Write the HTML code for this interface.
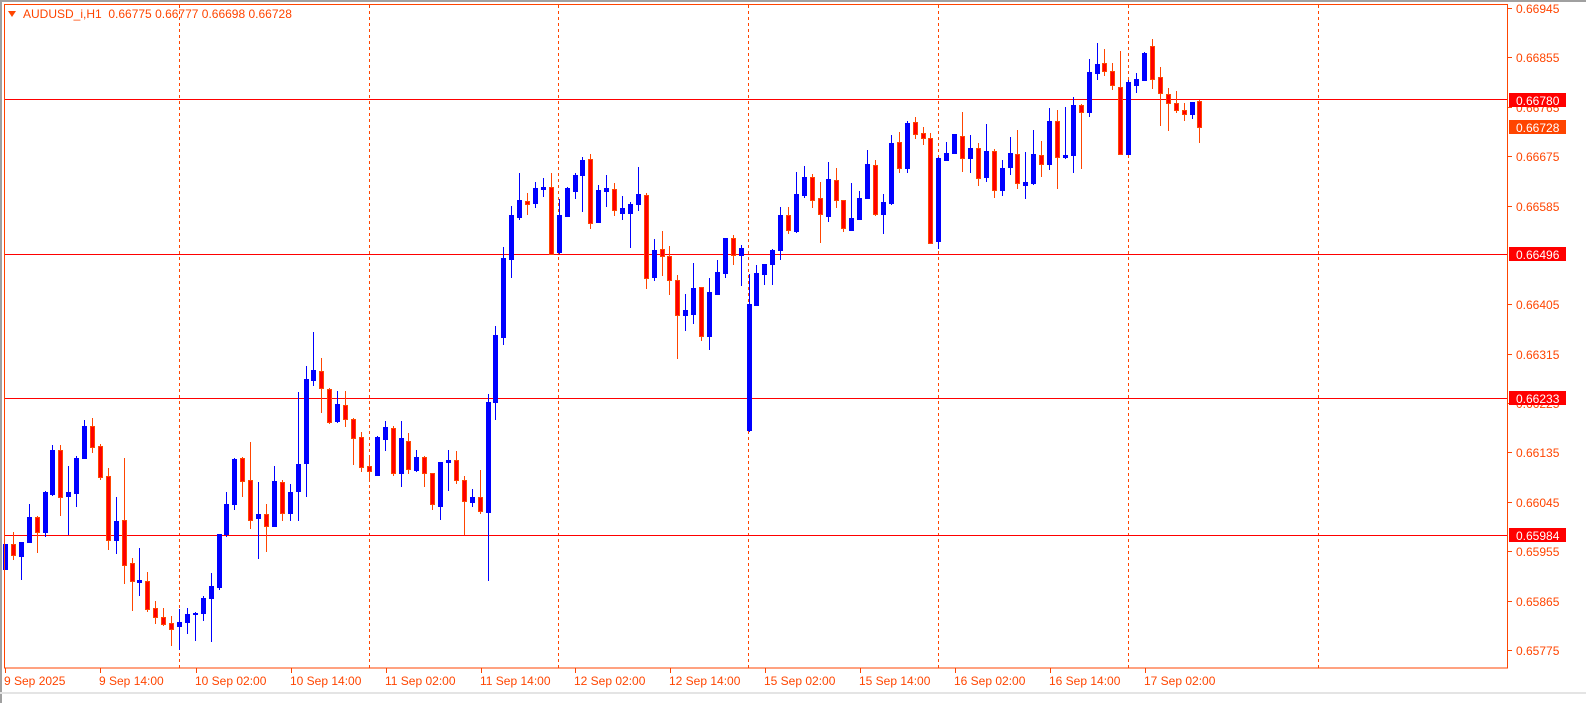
<!DOCTYPE html>
<html><head><meta charset="utf-8">
<style>
html,body{margin:0;padding:0;background:#fff;width:1586px;height:703px;overflow:hidden}
svg{display:block}
text{font-family:"Liberation Sans",sans-serif;font-size:12px}
</style></head><body>
<svg id="s" width="1586" height="703" viewBox="0 0 1586 703" xmlns="http://www.w3.org/2000/svg">
<rect x="0" y="0" width="1586" height="703" fill="#fff"/>
<rect x="0" y="0" width="1586" height="2" fill="#a0a0a0"/>
<rect x="0" y="0" width="2" height="703" fill="#a0a0a0"/>
<rect x="0" y="692" width="1586" height="2" fill="#e4e4e4"/>
<g id="grid"></g>
<g id="candles"></g>
<rect x="4.5" y="4.5" width="1503" height="663.5" fill="none" stroke="#ff4500" stroke-width="1"/>
<g id="axis" fill="#ff4500"></g>
<polygon points="8,11 16,11 12,17" fill="#ff4500"/>
<text x="23" y="18" fill="#ff4500">AUDUSD_i,H1&#160; 0.66775 0.66777 0.66698 0.66728</text>
</svg>
<script>
var NS="http://www.w3.org/2000/svg";
function el(p,t,a,txt){var e=document.createElementNS(NS,t);for(var k in a)e.setAttribute(k,a[k]);if(txt!=null)e.textContent=txt;p.appendChild(e);return e;}
var grid=document.getElementById('grid'),cg=document.getElementById('candles'),ax=document.getElementById('axis');
[179,369,558,748,938,1128,1318].forEach(function(x){el(grid,'line',{x1:x+.5,y1:5,x2:x+.5,y2:668,stroke:'#ff4500','stroke-width':1,'stroke-dasharray':'3,3'});});
[99,254,398,535].forEach(function(y){el(grid,'line',{x1:5,y1:y+.5,x2:1508,y2:y+.5,stroke:'#ff0000','stroke-width':1});});
var A=[['b',550,550,575,576],['r',538,550,561,566],['b',548,548,562,586],['b',510,523,548,548],['r',522,523,538,559],['b',497,498,538,543],['b',451,456,500,502],['r',451,456,503,522],['b',472,498,502,541],['b',462,464,499,513],['b',426,432,464,464],['r',424,432,453,459],['r',450,452,483,486],['r',474,482,546,556],['b',503,527,546,560],['r',464,526,571,590],['r',564,569,587,617],['b',554,586,588,602],['r',578,587,615,618],['r',607,614,624,631],['r',614,624,631,633],['r',623,630,636,653],['b',615,629,633,657],['b',614,620,629,641],['b',618,619,621,648],['b',602,604,619,628],['b',579,592,604,649],['b',540,540,593,596],['b',498,510,540,543],['b',464,465,510,516],['r',463,464,487,503],['r',448,486,526,535],['b',488,520,524,565],['r',510,520,532,558],['b',472,487,532,532],['r',486,488,519,527],['b',490,498,519,527]];
var B=[['b',397,469,497,527],['b',371,384,468,503],['b',336,375,385,391],['r',362,376,393,418],['r',393,394,427,429],['b',396,409,426,428],['r',396,410,424,432],['r',423,424,443,470],['r',437,442,473,478],['r',460,472,477,488],['b',441,442,481,482],['b',426,432,444,456],['r',431,433,479,482],['b',426,443,479,493],['r',438,446,475,480],['b',455,462,476,478],['r',461,462,479,493],['r',479,479,510,516],['b',467,467,512,526],['b',455,465,467,497],['r',456,465,486,490],['r',482,486,507,541],['b',495,503,508,513],['r',476,503,517,520],['b',399,407,518,588],['b',330,339,407,425],['b',250,261,341,349],['b',209,218,262,282],['b',176,203,220,223],['r',196,204,207,218],['b',185,191,206,211],['b',181,190,192,200],['r',176,190,257,257],['b',202,218,255,257],['b',190,191,219,220]];
var C=[['b',175,177,193,202],['b',159,162,177,215],['r',156,161,226,232],['b',187,192,225,225],['b',177,190,193,210],['r',185,191,213,219],['b',199,211,216,223],['b',205,207,216,251],['b',169,196,207,214],['r',195,197,282,293],['b',242,253,281,285],['r',234,252,259,280],['r',249,259,284,299],['r',279,284,319,364],['b',298,314,319,335],['b',266,292,318,328],['r',291,291,341,346],['b',282,296,340,355],['b',263,276,298,299],['b',241,241,277,282],['r',238,241,258,268],['b',248,251,258,290],['b',278,308,436,438],['b',268,277,309,309],['b',267,267,278,289],['b',252,253,267,289],['b',210,218,253,263],['r',210,218,233,237],['b',174,196,234,236],['b',168,179,198,201],['r',176,179,203,211],['r',184,201,217,246],['b',164,181,219,225],['r',170,182,203,211],['r',203,203,231,235],['b',185,221,233,233],['b',193,201,222,223]];
var D=[['b',366,408,512,512],['r',396,411,560,566],['b',500,525,560,623],['b',321,345,527,533],['r',312,342,422,437],['b',279,285,422,437],['r',267,282,317,332],['r',297,315,331,350],['r',315,330,650,653],['b',388,390,644,668],['b',342,375,398,398],['b',318,318,375,375],['r',252,324,392,432],['b',321,360,392,437],['r',345,360,452,476],['b',288,369,449,464],['r',363,369,488,512],['b',396,420,488,506],['b',327,375,419,443],['r',305,378,467,485],['b',372,465,473,515],['b',306,378,467,473],['r',339,381,410,449],['b',237,279,410,428],['r',246,279,389,485],['b',234,381,389,395],['b',204,228,383,437],['r',225,228,251,425],['b',90,129,251,266],['b',42,105,131,152],['r',60,102,125,140],['r',102,126,167,185],['r',66,174,377,377],['b',153,159,380,380],['b',132,150,167,192],['b',69,72,152,152],['r',27,51,149,180],['r',114,144,194,293],['r',177,195,224,308],['r',186,222,245,254],['r',222,243,257,278],['b',219,219,258,272]];
var data=[];
function add(arr,f){arr.forEach(function(c){data.push([c[0],f(c[1]),f(c[2]),f(c[3]),f(c[4])]);});}
add(A,function(y){return 315+0.995*(y-320);});
add(B,function(y){return 157.6+0.99*(y-160);});
add(C,function(y){return y-1.7-0.014*(y-140);});
add(D,function(y){return 29.7+0.3284*y;});
data.push(['r',100,101,127,143]);
data.forEach(function(c,i){
 var x=Math.round(5+i*7.91);
 var h=Math.round(c[1]),t=Math.round(c[2]),b=Math.round(c[3]),l=Math.round(c[4]);
 if(b-t<1)b=t+1;
 if(c[0]=='b'){
  el(cg,'rect',{x:x,y:h,width:1,height:Math.max(1,l-h),fill:'#0000ff'});
  el(cg,'rect',{x:x-2,y:t,width:5,height:b-t+1,fill:'#0000ff'});
 }else{
  el(cg,'rect',{x:x,y:h,width:1,height:Math.max(1,l-h),fill:'#ff4500'});
  el(cg,'rect',{x:x-2,y:t,width:5,height:b-t+1,fill:'#ff4500'});
  if(b-t>=3)el(cg,'rect',{x:x-1,y:t+1,width:3,height:b-t-1,fill:'#ff0000'});
 }
});
// price axis
[['0.66945',8],['0.66855',57],['0.66765',107],['0.66675',156],['0.66585',206],['0.66405',304],['0.66315',354],['0.66225',403],['0.66135',452],['0.66045',502],['0.65955',551],['0.65865',601],['0.65775',650]].forEach(function(p){
 el(ax,'rect',{x:1508,y:p[1],width:4,height:1});
 el(ax,'text',{x:1516,y:p[1]+5},p[0]);
});
[['0.66780',100,'#ff0000'],['0.66728',127,'#ff4500'],['0.66496',254,'#ff0000'],['0.66233',398,'#ff0000'],['0.65984',535,'#ff0000']].forEach(function(p){
 el(ax,'rect',{x:1509,y:p[1]-7,width:57,height:14,fill:p[2]});
 el(ax,'text',{x:1516,y:p[1]+5,fill:'#fff'},p[0]);
});
// time axis
[['9 Sep 2025',5],['9 Sep 14:00',100],['10 Sep 02:00',196],['10 Sep 14:00',291],['11 Sep 02:00',386],['11 Sep 14:00',481],['12 Sep 02:00',575],['12 Sep 14:00',670],['15 Sep 02:00',765],['15 Sep 14:00',860],['16 Sep 02:00',955],['16 Sep 14:00',1050],['17 Sep 02:00',1145]].forEach(function(p){
 el(ax,'rect',{x:p[1],y:668,width:1,height:5});
 el(ax,'text',{x:p[1]-1,y:685},p[0]);
});
</script>
</body></html>
